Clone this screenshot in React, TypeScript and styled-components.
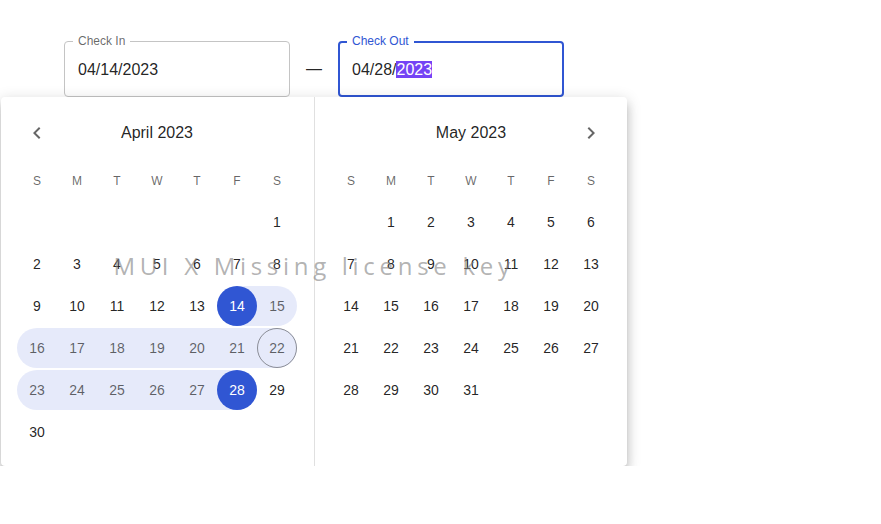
import React from 'react'
import styled, { createGlobalStyle } from 'styled-components'

const GlobalStyle = createGlobalStyle`
  body {
    margin: 0;
    background: #fff;
    font-family: "Liberation Sans", Arial, sans-serif;
    color: rgba(0, 0, 0, 0.87);
  }
`

const BLUE = '#3056d3'
const BAND = 'rgba(48, 86, 211, 0.12)'
const WEEKDAYS = ['S', 'M', 'T', 'W', 'T', 'F', 'S']

type Month = {
  title: string
  offset: number
  days: number
  nav: 'prev' | 'next'
  month: number
}

const months: Month[] = [
  { title: 'April 2023', offset: 6, days: 30, nav: 'prev', month: 4 },
  { title: 'May 2023', offset: 1, days: 31, nav: 'next', month: 5 },
]

const RANGE_START = 14
const RANGE_END = 28
const TODAY = 22

const ChevronLeft = () => (
  <svg width="24" height="24" viewBox="0 0 24 24" fill="currentColor">
    <path d="M15.41 16.59 10.83 12l4.58-4.59L14 6l-6 6 6 6 1.41-1.41z" />
  </svg>
)

const ChevronRight = () => (
  <svg width="24" height="24" viewBox="0 0 24 24" fill="currentColor">
    <path d="M8.59 16.59 13.17 12 8.59 7.41 10 6l6 6-6 6-1.41-1.41z" />
  </svg>
)

const MonthView: React.FC<{ data: Month; first?: boolean }> = ({ data, first }) => {
  const cells: (number | null)[] = []
  for (let i = 0; i < data.offset; i++) cells.push(null)
  for (let d = 1; d <= data.days; d++) cells.push(d)

  return (
    <MonthPanel $first={first}>
      <MonthHeader>
        {data.nav === 'prev' ? (
          <NavButton aria-label="Previous month">
            <ChevronLeft />
          </NavButton>
        ) : (
          <span />
        )}
        <MonthTitle>{data.title}</MonthTitle>
        {data.nav === 'next' ? (
          <NavButton aria-label="Next month">
            <ChevronRight />
          </NavButton>
        ) : (
          <span />
        )}
      </MonthHeader>
      <WeekRow>
        {WEEKDAYS.map((w, i) => (
          <WeekDay key={i}>{w}</WeekDay>
        ))}
      </WeekRow>
      <DayGrid>
        {cells.map((d, i) => {
          if (d === null) return <DayCell key={i} />
          const col = i % 7
          const active = data.month === 4
          const inRange = active && d >= RANGE_START && d <= RANGE_END
          const edge = active && (d === RANGE_START || d === RANGE_END)
          return (
            <DayCell
              key={i}
              $band={inRange}
              $roundLeft={col === 0 || d === RANGE_START}
              $roundRight={col === 6 || d === RANGE_END}
            >
              <Day
                $selected={edge}
                $muted={inRange && !edge}
                $today={active && d === TODAY}
              >
                {d}
              </Day>
            </DayCell>
          )
        })}
      </DayGrid>
    </MonthPanel>
  )
}

const App: React.FC = () => (
  <Page>
    <GlobalStyle />
    <FieldRow>
      <Field>
        <FieldLabel>Check In</FieldLabel>
        <FieldValue>04/14/2023</FieldValue>
      </Field>
      <Dash>—</Dash>
      <Field $focused>
        <FieldLabel $focused>Check Out</FieldLabel>
        <FieldValue>
          04/28/<Selection>2023</Selection>
        </FieldValue>
      </Field>
    </FieldRow>
    <Popper>
      <MonthView data={months[0]} first />
      <Divider />
      <MonthView data={months[1]} />
      <Watermark>MUI X Missing license key</Watermark>
    </Popper>
  </Page>
)

export default App

const Page = styled.div`
  display: flex;
  flex-direction: column;
  align-items: flex-start;
  padding-top: 41px;
`
const FieldRow = styled.div`
  display: flex;
  align-items: center;
  margin-left: 64px;
`
const Field = styled.div<{ $focused?: boolean }>`
  position: relative;
  box-sizing: border-box;
  width: 226px;
  height: 56px;
  display: flex;
  align-items: center;
  padding-left: ${(p) => (p.$focused ? '12px' : '13px')};
  border: ${(p) => (p.$focused ? `2px solid ${BLUE}` : '1px solid #c4c4c4')};
  border-radius: 4px;
`
const FieldLabel = styled.span<{ $focused?: boolean }>`
  position: absolute;
  top: ${(p) => (p.$focused ? '-10px' : '-9px')};
  left: ${(p) => (p.$focused ? '7px' : '8px')};
  padding: 0 5px;
  background: #fff;
  font-size: 12px;
  line-height: 16px;
  color: ${(p) => (p.$focused ? BLUE : 'rgba(0, 0, 0, 0.6)')};
`
const FieldValue = styled.span`
  margin-top: 2px;
  font-size: 16px;
  line-height: 20px;
  color: rgba(0, 0, 0, 0.87);
`
const Selection = styled.span`
  background: #7443f5;
  color: #fff;
`
const Dash = styled.span`
  margin: 0 16px;
  font-size: 16px;
  color: rgba(0, 0, 0, 0.87);
`
const Popper = styled.div`
  position: relative;
  display: flex;
  margin-left: 1px;
  background: #fff;
  border-radius: 4px;
  box-shadow: 0px 5px 5px -3px rgba(0, 0, 0, 0.2),
    0px 8px 10px 1px rgba(0, 0, 0, 0.14), 0px 3px 14px 2px rgba(0, 0, 0, 0.12);
`
const MonthPanel = styled.div<{ $first?: boolean }>`
  box-sizing: border-box;
  padding: 16px ${(p) => (p.$first ? '17px' : '16px')} 13px 16px;
`
const Divider = styled.div`
  width: 1px;
  align-self: stretch;
  background: #e0e0e0;
`
const MonthHeader = styled.div`
  display: grid;
  grid-template-columns: 40px 1fr 40px;
  align-items: center;
  height: 40px;
  margin-bottom: 8px;
`
const NavButton = styled.button`
  width: 40px;
  height: 40px;
  padding: 0;
  border: 0;
  background: transparent;
  display: flex;
  align-items: center;
  justify-content: center;
  color: rgba(0, 0, 0, 0.6);
`
const MonthTitle = styled.div`
  text-align: center;
  font-size: 16px;
  color: rgba(0, 0, 0, 0.87);
`
const WeekRow = styled.div`
  display: grid;
  grid-template-columns: repeat(7, 40px);
  height: 40px;
  align-items: center;
`
const WeekDay = styled.span`
  text-align: center;
  font-size: 12px;
  color: rgba(0, 0, 0, 0.6);
`
const DayGrid = styled.div`
  display: grid;
  grid-template-columns: repeat(7, 40px);
  grid-auto-rows: 42px;
  align-items: center;
`
const DayCell = styled.div<{
  $band?: boolean
  $roundLeft?: boolean
  $roundRight?: boolean
}>`
  height: 40px;
  background: ${(p) => (p.$band ? BAND : 'transparent')};
  border-radius: ${(p) =>
    `${p.$roundLeft ? '50%' : '0'} ${p.$roundRight ? '50%' : '0'} ${
      p.$roundRight ? '50%' : '0'
    } ${p.$roundLeft ? '50%' : '0'}`};
`
const Day = styled.div<{ $selected?: boolean; $muted?: boolean; $today?: boolean }>`
  box-sizing: border-box;
  width: 40px;
  height: 40px;
  border-radius: 50%;
  display: flex;
  align-items: center;
  justify-content: center;
  font-size: 14px;
  background: ${(p) => (p.$selected ? BLUE : 'transparent')};
  color: ${(p) =>
    p.$selected ? '#fff' : p.$muted ? 'rgba(0, 0, 0, 0.6)' : 'rgba(0, 0, 0, 0.87)'};
  border: ${(p) => (p.$today ? '1px solid rgba(0, 0, 0, 0.4)' : '0')};
`
const Watermark = styled.div`
  position: absolute;
  left: 0;
  right: 0;
  bottom: 50%;
  text-align: center;
  pointer-events: none;
  font-family: "Open Sans", sans-serif;
  font-size: 24px;
  letter-spacing: 4.7px;
  color: rgba(130, 130, 130, 0.62);
`
